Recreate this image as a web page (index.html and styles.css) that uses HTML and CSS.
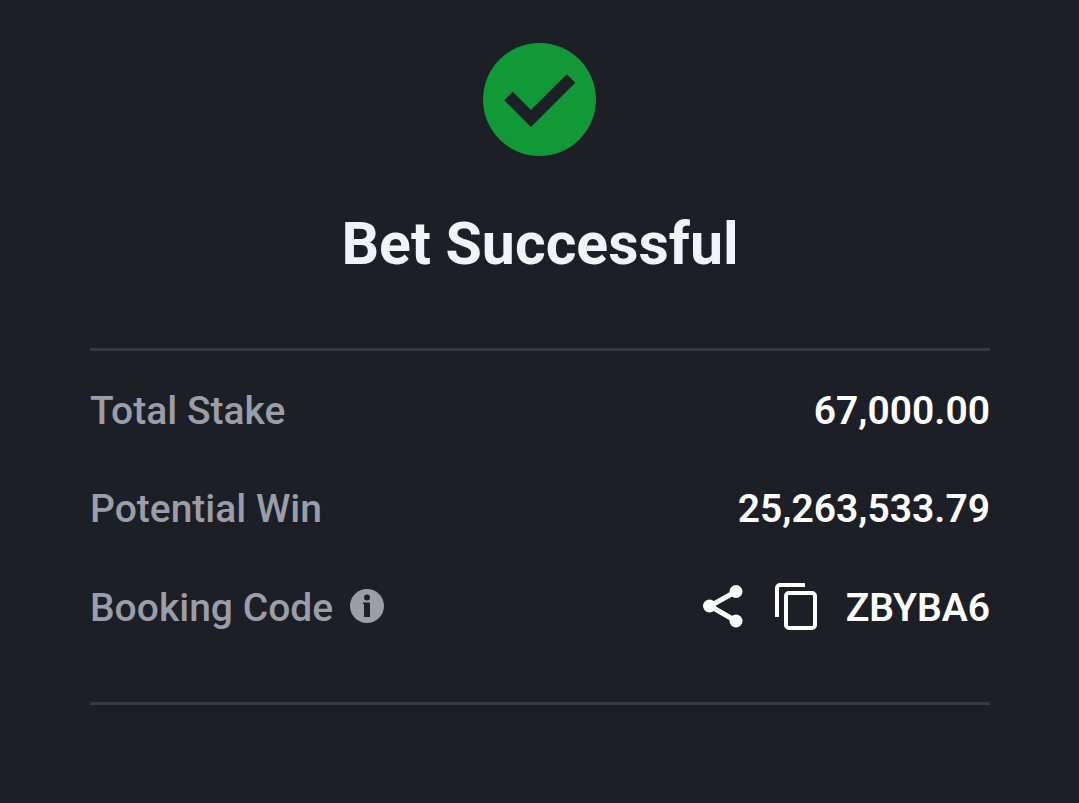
FILE: index.html
```html
<!DOCTYPE html>
<html lang="en">
<head>
  <meta charset="UTF-8" />
  <meta name="viewport" content="width=device-width, initial-scale=1.0"/>
  <title>Bet Successful</title>
  <link rel="stylesheet" href="styles.css">
</head>
<body>
  <main class="receipt">
    <svg class="check" viewBox="0 0 114 114" aria-hidden="true">
      <circle cx="56.5" cy="57.5" r="56.5" fill="#109936"/>
      <path d="M25.500 54 48 76.500 88 36.500" fill="none" stroke="#1c1f26" stroke-width="12"/>
    </svg>
    <h1>Bet Successful</h1>

    <dl class="details">
      <div class="row">
        <dt>Total Stake</dt>
        <dd>67,000.00</dd>
      </div>
      <div class="row">
        <dt>Potential Win</dt>
        <dd>25,263,533.79</dd>
      </div>
      <div class="row">
        <dt>
          Booking Code
          <button type="button" class="icon-btn info" aria-label="About booking code">
            <svg width="34" height="38" viewBox="0 0 34 38">
              <circle cx="17" cy="17" r="17" fill="#9b9da9"/>
              <circle cx="17" cy="8.500" r="3" fill="#1c1f26"/>
              <path d="M13 13.500h7V28h-6V15h-1z" fill="#1c1f26"/>
            </svg>
          </button>
        </dt>
        <dd>
          <button type="button" class="icon-btn" aria-label="Share">
            <svg width="40" height="50" viewBox="0 0 40 50">
              <path d="M33 8.500 7 23l26 15" fill="none" stroke="#fff" stroke-width="5"/>
              <circle cx="33" cy="8.500" r="6.500" fill="#fff"/>
              <circle cx="6.500" cy="23" r="6.500" fill="#fff"/>
              <circle cx="33" cy="38" r="6.500" fill="#fff"/>
            </svg>
          </button>
          <button type="button" class="icon-btn copy" aria-label="Copy code">
            <svg width="42" height="50" viewBox="0 0 42 50" fill="none" stroke="#fff" stroke-width="4">
              <path d="M30 2H5a3 3 0 0 0-3 3v29"/>
              <rect x="11" y="10" width="29" height="35" rx="3"/>
            </svg>
          </button>
          <span class="code">ZBYBA6</span>
        </dd>
      </div>
    </dl>
  </main>
</body>
</html>
```

FILE: styles.css
```css
* { box-sizing: border-box; }
body {
  margin: 0; background-color: #1c1f26; color: #fff;
  font-family: Roboto, "Liberation Sans", sans-serif;
}
.receipt { padding: 42px 89px 98px 90px; }
.check { display: block; width: 114px; height: 114px; margin: 0 auto; }
h1 {
  margin: 53px 0 69px; font-size: 59px; line-height: 70px;
  font-weight: bold; text-align: center; color: #f2f3f7;
}
.details {
  display: flex; flex-direction: column; gap: 50px;
  margin: 0; padding: 36px 0 69px;
  border-top: 3px solid #353941; border-bottom: 3px solid #353941;
}
.row { display: flex; justify-content: space-between; align-items: center; font-size: 39px; line-height: 48px; }
dt { display: flex; align-items: center; color: #9b9da9; font-weight: 500; }
dd { display: flex; align-items: center; margin: 0; font-weight: 600; }
.icon-btn { padding: 0; border: 0; background: none; cursor: pointer; }
.icon-btn svg { display: block; }
.info { margin-left: 17px; }
.copy { margin: 0 29px 0 32px; }
```
